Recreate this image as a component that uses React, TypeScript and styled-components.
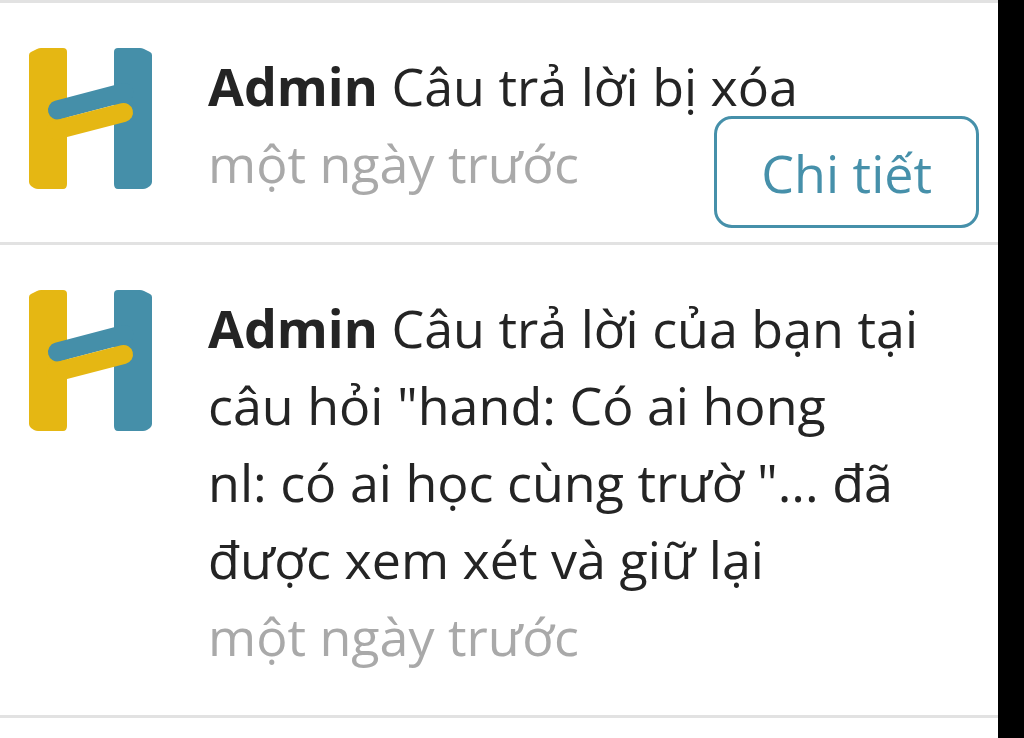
import React from "react";
import styled, { createGlobalStyle } from "styled-components";

const GlobalStyle = createGlobalStyle`
  * { box-sizing: border-box; }
  html, body { margin: 0; background: #000; }
  body {
    font-family: "Open Sans", "Noto Sans", sans-serif;
    color: #242424;
  }
`;

const Panel = styled.main`
  margin-right: 26px;
  min-height: 100vh;
  background: #fff;
  border-top: 3px solid #e2e2e2;
`;

const List = styled.ul`
  list-style: none;
  margin: 0;
  padding: 0;
`;

const Item = styled.li`
  position: relative;
  display: flex;
  align-items: flex-start;
  gap: 56px;
  padding: 44px 64px 41px 29px;
  border-bottom: 3px solid #e2e2e2;
`;

const Logo = styled.svg`
  flex: none;
  width: 123px;
  height: 142px;
`;

const Body = styled.div`
  flex: 1;
  font-size: 52px;
  line-height: 77px;
`;

const Message = styled.p`
  margin: 0;
`;

const Time = styled.time`
  display: block;
  color: #a9a9a9;
`;

const DetailButton = styled.button`
  position: absolute;
  right: 19px;
  bottom: 14px;
  height: 112px;
  padding: 0 44px;
  border: 3px solid #4690aa;
  border-radius: 18px;
  background: #fff;
  color: #4690aa;
  font: inherit;
  font-size: 52px;
`;

function HLogo() {
  return (
    <Logo viewBox="0 0 123 142" role="img" aria-label="H">
      <path fill="#e5b713" d="M12 1H34Q38 1 38 5V137Q38 142 34 142H9Q7 142 5 141L2 139Q0 137 0 135V8Q0 6 2 5L8 2Q10 1 12 1Z" />
      <path fill="#458fa9" d="M89 1H111Q113 1 115 2L121 5Q123 6 123 8V135Q123 137 121 139L118 141Q116 142 114 142H89Q85 142 85 137V5Q85 1 89 1Z" />
      <path stroke="#458fa9" strokeWidth="19" strokeLinecap="round" d="M28.5 63L95 45.5" />
      <path stroke="#e5b713" strokeWidth="19" strokeLinecap="round" d="M27 83L94.5 65.5" />
    </Logo>
  );
}

export default function App() {
  return (
    <>
      <GlobalStyle />
      <Panel>
        <List>
          <Item>
            <HLogo />
            <Body>
              <Message><strong>Admin</strong> Câu trả lời bị xóa</Message>
              <Time>một ngày trước</Time>
            </Body>
            <DetailButton type="button">Chi tiết</DetailButton>
          </Item>
          <Item>
            <HLogo />
            <Body>
              <Message>
                <strong>Admin</strong> Câu trả lời của bạn tại câu hỏi "hand: Có ai hong<br />
                nl: có ai học cùng trườ "... đã được xem xét và giữ lại
              </Message>
              <Time>một ngày trước</Time>
            </Body>
          </Item>
        </List>
      </Panel>
    </>
  );
}
